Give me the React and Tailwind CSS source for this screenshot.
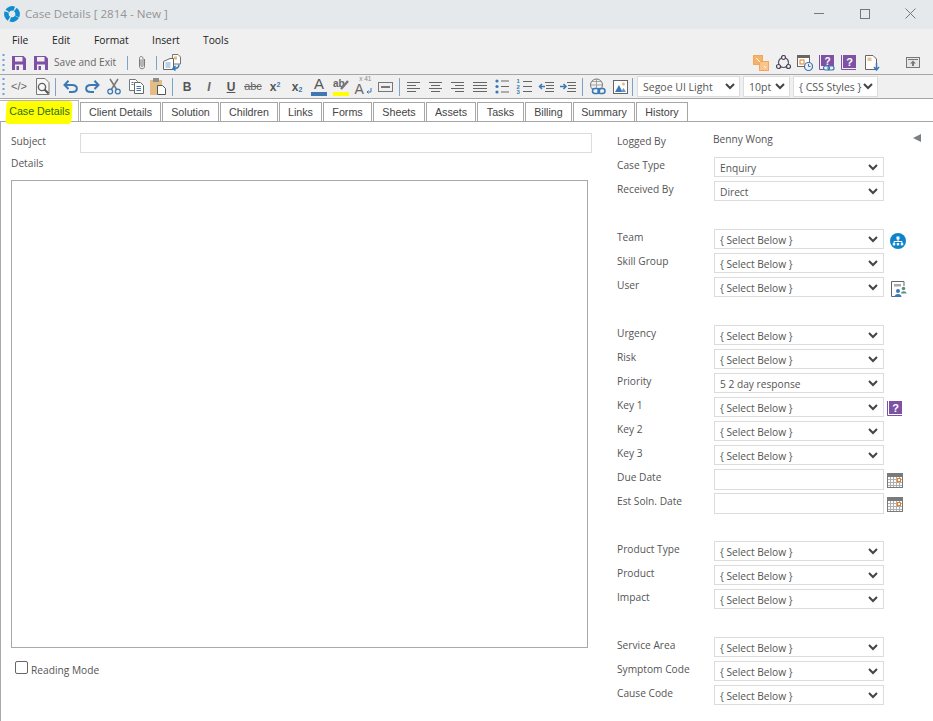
import React from "react";

const FONT = "font-['Open_Sans','Noto_Sans',sans-serif]";
const BLUE = "#3b78b5";
const PURPLE = "#7d51a3";

const Svg = ({ w = 16, h = 16, children, className = "" }) => (
  <svg width={w} height={h} viewBox={`0 0 ${w} ${h}`} fill="none" className={`block shrink-0 ${className}`}>
    {children}
  </svg>
);

const Grip = () => (
  <Svg w={3} h={18} className="ml-[2px]">
    {[1, 6, 11, 16].map((y) => (
      <rect key={y} x="0.5" y={y - 1} width="2" height="2" fill="#6f9fd3" />
    ))}
  </Svg>
);
const Sep = ({ className = "" }) => <div className={`h-[18px] w-px shrink-0 bg-[#7fa3c8] ${className}`} />;
const Slot = ({ children }) => <div className="flex h-[22px] w-[22px] shrink-0 items-center justify-center">{children}</div>;

const Save = () => (
  <Svg w={14} h={14}>
    <path d="M0 0H11.5L14 2.5V14H0Z" fill={PURPLE} />
    <rect x="3" y="1" width="7.5" height="4.5" fill="#f0f0f0" />
    <rect x="3" y="8.5" width="8" height="5.5" fill="#f0f0f0" />
    <rect x="4.5" y="10" width="2.5" height="4" fill={PURPLE} />
  </Svg>
);
const Clip = () => (
  <Svg w={10} h={16}>
    <path d="M7.5 4V11.5C7.5 14.5 2.5 14.5 2.5 11.5V3.5C2.5 .8 6 .8 6 3.5V10.5C6 11.8 4 11.8 4 10.5V4.5" stroke="#7a7a7a" strokeWidth="1" />
  </Svg>
);
const Merge = () => (
  <Svg w={18} h={17}>
    <path d="M9.5 .5H15L17.5 3V10H9.5Z" fill="#fff" stroke="#777" />
    <rect x="11" y="2.5" width="3" height="3" fill="#e9b77c" />
    <path d="M.5 7.5L7 4.5H10.5V15.5H.5Z" fill="#fff" stroke="#666" />
    <rect x="2.5" y="8" width="5" height="6" fill="#b9d0e6" />
    <path d="M16 10.5C16 14.5 13 14.5 10 14.5M12.5 12L10 14.5L12.5 16.5" stroke="#2f7cc0" strokeWidth="1.5" />
  </Svg>
);
const Preview = () => (
  <Svg w={15} h={17}>
    <path d="M10 .5H1.5V16.5H14V4.5Z" stroke="#777" fill="#f8f8f8" />
    <circle cx="7" cy="9" r="3.6" stroke="#5f5f5f" strokeWidth="1.4" />
    <path d="M9.5 11.5L13.5 15.5" stroke="#555" strokeWidth="2" />
  </Svg>
);
const Undo = ({ flip }) => (
  <Svg w={15} h={13} className={flip ? "-scale-x-100" : ""}>
    <path d="M2 5H9C15.5 5 15.5 12 9 12H6" stroke={BLUE} strokeWidth="2" />
    <path d="M5.5 .8L1.5 5L5.5 9" stroke={BLUE} strokeWidth="2" />
  </Svg>
);
const Cut = () => (
  <Svg w={14} h={17}>
    <path d="M3 1L10 12M11 1L4 12" stroke="#777" strokeWidth="1.5" />
    <circle cx="3.2" cy="13.5" r="2.4" stroke={BLUE} strokeWidth="1.3" />
    <circle cx="10.8" cy="13.5" r="2.4" stroke={BLUE} strokeWidth="1.3" />
  </Svg>
);
const Copy = () => (
  <Svg w={15} h={15}>
    <path d="M.5 .5H6.5L8.5 2.5V11.5H.5Z" fill="#fff" stroke="#777" />
    <path d="M5.5 3.5H11.5L14.5 6.5V14.5H5.5Z" fill="#fff" stroke="#666" />
    <path d="M7.5 7.5H12M7.5 9.5H12M7.5 11.5H12M2.5 3.5H4.5M2.5 5.5H4.5" stroke={BLUE} />
  </Svg>
);
const Paste = () => (
  <Svg w={16} h={17}>
    <rect x="0" y="2" width="12" height="15" fill="#e3bd85" />
    <rect x="3" y="0" width="6" height="4" fill="#8d8d8d" />
    <path d="M7.5 7.5H12.5L15.5 10.5V16.5H7.5Z" fill="#fff" stroke="#555" />
  </Svg>
);
const Lines = ({ kind }) => {
  const rows = {
    l: [[0, 13], [0, 9], [0, 13], [0, 9]],
    c: [[0, 13], [2, 11], [0, 13], [2, 11]],
    r: [[0, 13], [4, 13], [0, 13], [4, 13]],
    j: [[0, 14], [0, 14], [0, 14], [0, 14]],
  }[kind];
  return (
    <Svg w={14} h={11}>
      {rows.map(([a, b], i) => (
        <path key={i} d={`M${a} ${1.5 + i * 3}H${b}`} stroke="#666" />
      ))}
    </Svg>
  );
};
const Bullets = () => (
  <Svg w={14} h={15}>
    {[2, 7.5, 13].map((y) => (
      <g key={y}>
        <circle cx="2" cy={y} r="1.6" fill={BLUE} />
        <path d={`M6 ${y}H14`} stroke="#666" />
      </g>
    ))}
  </Svg>
);
const Numbers = () => (
  <div className="h-[16px] w-[15px] shrink-0">
    {[0, 1, 2].map((i) => (
      <div key={i} className="flex h-[5.4px] items-center gap-[2px]">
        <span className="w-[4px] font-['Liberation_Sans'] text-[6px] font-bold leading-none text-[#3b78b5]">{i + 1}</span>
        <div className="h-px w-[9px] bg-[#666]" />
      </div>
    ))}
  </div>
);
const Indent = ({ out }) => (
  <Svg w={16} h={11}>
    <path d="M7 1.5H16M8 4.5H16M8 7.5H16M7 10.5H16" stroke="#666" />
    {out ? (
      <path d="M7 5.5H1.5M4 3L1.5 5.5L4 8" stroke={BLUE} strokeWidth="1.5" />
    ) : (
      <path d="M0 5.5H6M3.5 3L6 5.5L3.5 8" stroke={BLUE} strokeWidth="1.5" />
    )}
  </Svg>
);
const LinkIcon = () => (
  <Svg w={17} h={17}>
    <circle cx="7.5" cy="7" r="6" stroke="#777" />
    <path d="M1.5 7H13.5M7.5 1V13M3 3.5H12M3 10.5H12" stroke="#888" strokeWidth=".7" />
    <rect x="3.5" y="10.5" width="7" height="5" rx="2.5" fill="#f0f0f0" stroke={BLUE} strokeWidth="1.5" />
    <rect x="9" y="10.5" width="7" height="5" rx="2.5" fill="none" stroke={BLUE} strokeWidth="1.5" />
  </Svg>
);
const ImageIcon = () => (
  <Svg w={15} h={14}>
    <rect x=".5" y=".5" width="14" height="13" fill="#fff" stroke="#666" />
    <circle cx="10.5" cy="4" r="1.5" fill="#e9b77c" />
    <path d="M2 12L6 5L9.5 12Z" fill={BLUE} />
    <path d="M8 12L10.5 8L13 12Z" fill="#5f9ad0" />
  </Svg>
);
const Chevron = () => (
  <Svg w={10} h={7}>
    <path d="M1 1L5 5L9 1" stroke="#444" strokeWidth="2" />
  </Svg>
);

const ToolSelect = ({ label, w }) => (
  <div className={`mr-[3px] flex h-[21px] shrink-0 items-center justify-between border border-[#dcdcdc] bg-white pl-[5px] pr-[4px] text-[10.5px] text-[#555] ${w}`}>
    <span className="relative top-px whitespace-nowrap">{label}</span>
    <Chevron />
  </div>
);

const Select = ({ value }) => (
  <div className="flex h-5 w-[170px] shrink-0 items-center justify-between border border-[#dcdcdc] bg-white pl-[5px] pr-[5px]">
    <span className="relative top-[2px] whitespace-nowrap text-[10.2px] text-[#555]">{value}</span>
    <Chevron />
  </div>
);
const Input = () => <div className="h-[21px] w-[170px] shrink-0 border border-[#dcdcdc] bg-white" />;

const Calendar = () => (
  <Svg w={16} h={15} className="ml-[3px]">
    <rect width="16" height="15" fill="#7a7a7a" />
    <rect x="1" y="4" width="14" height="10" fill="#fafafa" />
    <path d="M3.5 4V14M6.5 4V14M9.5 4V14M12.5 4V14M1 6.5H15M1 9.5H15M1 12.5H15" stroke="#b0b0b0" />
    <rect x="10.5" y="5.5" width="3" height="3" fill="#fff" stroke="#e67e22" />
  </Svg>
);
const Book = () => (
  <Svg w={15} h={15}>
    <path d="M.5 0V14.5H15" stroke={PURPLE} />
    <rect x="2" y="0" width="13" height="13" fill={PURPLE} />
    <text x="8.5" y="11" textAnchor="middle" fontSize="11" fontWeight="700" fontFamily="Liberation Sans" fill="#fff">?</text>
  </Svg>
);
const BookLink = () => (
  <Svg w={16} h={16}>
    <path d="M.5 0V14.5H6" stroke={PURPLE} />
    <rect x="2" y="0" width="13" height="11" fill={PURPLE} />
    <text x="8.5" y="9.5" textAnchor="middle" fontSize="10" fontWeight="700" fontFamily="Liberation Sans" fill="#fff">?</text>
    <rect x="4.5" y="11" width="6" height="4" rx="2" fill="#f0f0f0" stroke={BLUE} strokeWidth="1.2" />
    <rect x="9" y="11" width="6" height="4" rx="2" stroke={BLUE} strokeWidth="1.2" />
  </Svg>
);
const OrgCircle = () => (
  <Svg w={16} h={16} className="ml-[6px] mt-[4px]">
    <circle cx="8" cy="8" r="8" fill="#0b84cc" />
    <rect x="6.5" y="3.5" width="3" height="3" fill="#fff" />
    <path d="M8 6V8.5M4 10V8.5H12V10" stroke="#fff" />
    <rect x="2.8" y="10" width="2.4" height="2.4" fill="#fff" />
    <rect x="6.8" y="10" width="2.4" height="2.4" fill="#fff" />
    <rect x="10.8" y="10" width="2.4" height="2.4" fill="#fff" />
  </Svg>
);
const UserDoc = () => (
  <Svg w={16} h={16} className="ml-[7px] mt-[4px]">
    <path d="M13 5V.5H.5V15.5H4" stroke="#666" />
    <rect x="3" y="3" width="7" height="2.5" fill="#aaa" />
    <circle cx="7" cy="10" r="2" fill={BLUE} />
    <path d="M3.5 16C3.5 12 10.5 12 10.5 16Z" fill={BLUE} />
    <circle cx="12.5" cy="7.5" r="1.8" fill="#5d9080" />
    <path d="M10 12.5C10 9.5 15.5 9.5 15.5 12.5Z" fill="#5d9080" />
  </Svg>
);

const Row = ({ label, children, after }) => (
  <div className="flex h-6 items-start">
    <div className="w-[97px] shrink-0 whitespace-nowrap text-[10.2px] leading-4 text-[#555]">{label}</div>
    {children}
    {after}
  </div>
);
const SB = "{ Select Below }";
const Gap = () => <div className="h-6" />;

const tabs = [
  ["Client Details", "w-[81px]"],
  ["Solution", "w-[57px]"],
  ["Children", "w-[58px]"],
  ["Links", "w-[43px]"],
  ["Forms", "w-[49px]"],
  ["Sheets", "w-[52px]"],
  ["Assets", "w-[50px]"],
  ["Tasks", "w-[47px]"],
  ["Billing", "w-[47px]"],
  ["Summary", "w-[62px]"],
  ["History", "w-[52px]"],
];

export default function App() {
  return (
    <div className={`relative h-[721px] w-[933px] overflow-hidden bg-white ${FONT}`}>
      {/* Title bar */}
      <div className="flex h-[29px] items-center bg-[#e6e9ec] pb-[2px]">
        <Svg w={16} h={16} className="ml-[4px]">
          <circle cx="8" cy="8" r="5.6" stroke="#128cd0" strokeWidth="4.6" strokeDasharray="7.4 1.4" transform="rotate(30 8 8)" />
        </Svg>
        <span className="ml-[5px] whitespace-nowrap text-[11.6px] text-[#949494]">Case Details [ 2814 - New ]</span>
        <div className="ml-auto flex items-center pr-[17px]">
          <div className="h-px w-[10px] bg-[#777]" />
          <div className="ml-[36px] h-[10px] w-[10px] border border-[#777]" />
          <Svg w={11} h={11} className="ml-[35px]">
            <path d="M.5 .5L10.5 10.5M10.5 .5L.5 10.5" stroke="#777" />
          </Svg>
        </div>
      </div>

      {/* Menu */}
      <div className="flex h-[22px] items-center bg-[#f0f0f0] pl-[12px] pt-[2px] text-[10.3px] text-[#222]">
        <span className="w-[40px]">File</span>
        <span className="w-[42px]">Edit</span>
        <span className="w-[58px]">Format</span>
        <span className="w-[51px]">Insert</span>
        <span>Tools</span>
      </div>

      {/* Toolbar 1 */}
      <div className="flex h-[24px] items-center border-b border-[#a6a6a6] bg-[#f0f0f0] text-[#666]">
        <Grip />
        <div className="ml-[7px]"><Save /></div>
        <div className="ml-[8px]"><Save /></div>
        <span className="ml-[6px] whitespace-nowrap text-[10.1px] text-[#666]">Save and Exit</span>
        <Sep className="ml-[11px] !h-[14px]" />
        <div className="ml-[9px]"><Clip /></div>
        <Sep className="ml-[9px] !h-[14px]" />
        <div className="ml-[6px]"><Merge /></div>
        <div className="ml-auto flex items-center">
          <Svg w={16} h={16}>
            <rect x=".5" y=".5" width="9" height="9" fill="#f6b26b" stroke="#f2a65a" />
            <rect x="6.5" y="6.5" width="9" height="9" fill="#f9c58d" stroke="#f2a65a" />
            <path d="M3 3L7 7M11 11L13 13" stroke="#fff" />
          </Svg>
          <Svg w={15} h={15} className="ml-[7px]">
            <circle cx="7.5" cy="7.5" r="5" stroke="#556" strokeWidth="1.2" />
            <circle cx="7.5" cy="2.5" r="2" fill="#f0f0f0" stroke="#445" strokeWidth="1.2" />
            <circle cx="2.5" cy="11.5" r="2" fill="#f0f0f0" stroke="#445" strokeWidth="1.2" />
            <circle cx="12.5" cy="11.5" r="2" fill="#f0f0f0" stroke="#445" strokeWidth="1.2" />
          </Svg>
          <Svg w={16} h={16} className="ml-[6px]">
            <rect x=".5" y=".5" width="12" height="11" fill="#fff" stroke="#666" />
            <rect x="1" y="1" width="11" height="2" fill="#666" />
            <rect x="3" y="5" width="4" height="4" stroke="#e67e22" />
            <circle cx="11.5" cy="11.5" r="4" fill="#f0f0f0" stroke={BLUE} strokeWidth="1.2" />
            <path d="M11.5 9V11.5H13.5" stroke={BLUE} />
          </Svg>
          <div className="ml-[6px]"><BookLink /></div>
          <div className="ml-[6px]"><Book /></div>
          <Svg w={15} h={16} className="ml-[9px]">
            <path d="M.5 .5H8L11.5 4V14.5H.5Z" fill="#fff" stroke="#666" />
            <rect x="2.5" y="2.5" width="4" height="3.5" fill="#e9c48f" />
            <path d="M11.5 8V14M9 12L11.5 15L14 12" stroke={BLUE} strokeWidth="1.5" />
          </Svg>
          <Svg w={14} h={11} className="ml-[26px] mr-[13px]">
            <rect x=".5" y=".5" width="13" height="10" stroke="#777" fill="#e6e6e6" />
            <path d="M2 2.5H12" stroke="#777" />
            <path d="M7 3.5L10 6.5H8V9H6V6.5H4Z" fill="#777" />
          </Svg>
        </div>
      </div>

      {/* Toolbar 2 */}
      <div className="flex h-[24px] items-center border-b border-[#a6a6a6] bg-[#f0f0f0]">
        <Grip />
        <div className="ml-[3px]" />
        <Slot><span className="font-['Liberation_Sans'] text-[11px] text-[#666]">&lt;/&gt;</span></Slot>
        <div className="ml-px" />
        <Slot><Preview /></Slot>
        <Sep className="ml-[2px] mr-[3px]" />
        <Slot><Undo /></Slot>
        <Slot><Undo flip /></Slot>
        <Slot><Cut /></Slot>
        <Slot><Copy /></Slot>
        <Slot><Paste /></Slot>
        <Sep className="mx-[3px]" />
        <Slot><span className="font-['Liberation_Sans'] text-[12px] font-bold text-[#555]">B</span></Slot>
        <Slot><span className="font-['Liberation_Sans'] text-[12px] font-bold italic text-[#666]">I</span></Slot>
        <Slot><span className="font-['Liberation_Sans'] text-[12px] font-bold text-[#555] underline">U</span></Slot>
        <Slot><span className="font-['Liberation_Sans'] text-[11px] text-[#666] line-through">abc</span></Slot>
        <Slot><span className="font-['Liberation_Sans'] text-[12px] font-bold text-[#555]">x<sup className="text-[7px] text-[#3b78b5]">2</sup></span></Slot>
        <Slot><span className="font-['Liberation_Sans'] text-[12px] font-bold text-[#555]">x<sub className="text-[7px] text-[#3b78b5]">2</sub></span></Slot>
        <Slot>
          <div className="flex flex-col items-center">
            <span className="font-['Liberation_Sans'] text-[15px] leading-[14px] text-[#555]">A</span>
            <div className="mt-px h-[4px] w-[16px] bg-[#3f77b0]" />
          </div>
        </Slot>
        <Slot>
          <div className="flex flex-col items-start">
            <div className="relative h-[13px] w-[16px]">
              <span className="absolute left-0 top-0 font-['Liberation_Sans'] text-[10px] font-bold leading-[12px] text-[#666]">ab</span>
              <Svg w={16} h={13} className="absolute left-0 top-0">
                <path d="M8 11L15 3" stroke="#777" strokeWidth="2.4" />
              </Svg>
            </div>
            <div className="mt-px h-[4px] w-[16px] bg-[#ffff00]" />
          </div>
        </Slot>
        <Slot>
          <div className="relative h-[17px] w-[17px]">
            <span className="absolute bottom-[-1px] left-0 font-['Liberation_Sans'] text-[14px] leading-[14px] text-[#666]">A</span>
            <span className="absolute right-0 top-[-3px] whitespace-nowrap font-['Liberation_Sans'] text-[6.5px] leading-[7px] text-[#888]">x 41</span>
            <Svg w={6} h={7} className="absolute bottom-0 right-0">
              <path d="M5 0V4H1M2.5 2.5L1 4L2.5 5.5" stroke={BLUE} />
            </Svg>
          </div>
        </Slot>
        <Slot>
          <Svg w={15} h={10}>
            <rect x=".5" y=".5" width="14" height="9" stroke="#777" />
            <path d="M3 5H12" stroke="#777" strokeWidth="2" />
          </Svg>
        </Slot>
        <Sep className="mx-[3px]" />
        <Slot><Lines kind="l" /></Slot>
        <Slot><Lines kind="c" /></Slot>
        <Slot><Lines kind="r" /></Slot>
        <Slot><Lines kind="j" /></Slot>
        <Slot><Bullets /></Slot>
        <Slot><Numbers /></Slot>
        <Slot><Indent out /></Slot>
        <Slot><Indent /></Slot>
        <Sep className="mx-[3px]" />
        <Slot><LinkIcon /></Slot>
        <div className="ml-px" />
        <Slot><ImageIcon /></Slot>
        <Sep className="ml-px mr-[4px]" />
        <ToolSelect label="Segoe UI Light" w="w-[103px]" />
        <ToolSelect label="10pt" w="w-[47px]" />
        <ToolSelect label="{ CSS Styles }" w="w-[85px]" />
      </div>

      {/* Tabs */}
      <div className="relative flex h-[23px] items-end gap-px border-b border-[#a6a6a6] font-['Liberation_Sans',sans-serif] text-[10.7px] text-[#444]">
        <div className="absolute left-[6px] top-[2px] h-[23px] w-[66px] -skew-x-3 rounded-sm bg-[#ffff00]" />
        <div className="relative flex h-[21px] w-[79px] items-center justify-center border-r border-t border-[#b5b5b5] pl-[1px] text-[#2b6d1e]">Case Details</div>
        {tabs.map(([t, w]) => (
          <div key={t} className={`flex h-[19px] shrink-0 items-center justify-center border border-b-0 border-[#a6a6a6] ${w}`}>{t}</div>
        ))}
      </div>

      {/* Body */}
      <div className="relative flex h-[599px] border-l border-[#a9a9a9] text-[10.2px] text-[#555]">
        <Svg w={8} h={8} className="absolute left-[912px] top-[12px]">
          <path d="M8 0V8L0 4Z" fill="#7b7f86" />
        </Svg>

        <div className="w-[616px] shrink-0 pl-[10px] pt-[11px]">
          <div className="flex items-start">
            <div className="w-[69px] leading-4">Subject</div>
            <div className="h-[20px] w-[512px] border border-[#dcdcdc]" />
          </div>
          <div className="mt-[2px] h-4 leading-4">Details</div>
          <div className="mt-[9px] h-[468px] w-[577px] border border-[#a9a9a9]" />
          <div className="mt-[13px] flex items-start pl-[4px]">
            <div className="h-[13px] w-[13px] rounded-[2px] border border-[#666]" />
            <span className="ml-[3px] mt-px leading-4">Reading Mode</span>
          </div>
        </div>

        <div className="flex-1 pt-[11px]">
          <div className="flex h-6 items-start">
            <div className="w-[96px] leading-4">Logged By</div>
            <div className="leading-3">Benny Wong</div>
          </div>
          <Row label="Case Type"><Select value="Enquiry" /></Row>
          <Row label="Received By"><Select value="Direct" /></Row>
          <Gap />
          <Row label="Team" after={<OrgCircle />}><Select value={SB} /></Row>
          <Row label="Skill Group"><Select value={SB} /></Row>
          <Row label="User" after={<UserDoc />}><Select value={SB} /></Row>
          <Gap />
          <Row label="Urgency"><Select value={SB} /></Row>
          <Row label="Risk"><Select value={SB} /></Row>
          <Row label="Priority"><Select value="5 2 day response" /></Row>
          <Row label="Key 1" after={<div className="ml-[3px] mt-[4px]"><Book /></div>}><Select value={SB} /></Row>
          <Row label="Key 2"><Select value={SB} /></Row>
          <Row label="Key 3"><Select value={SB} /></Row>
          <Row label="Due Date" after={<div className="mt-[4px]"><Calendar /></div>}><Input /></Row>
          <Row label="Est Soln. Date" after={<div className="mt-[4px]"><Calendar /></div>}><Input /></Row>
          <Gap />
          <Row label="Product Type"><Select value={SB} /></Row>
          <Row label="Product"><Select value={SB} /></Row>
          <Row label="Impact"><Select value={SB} /></Row>
          <Gap />
          <Row label="Service Area"><Select value={SB} /></Row>
          <Row label="Symptom Code"><Select value={SB} /></Row>
          <Row label="Cause Code"><Select value={SB} /></Row>
        </div>
      </div>
    </div>
  );
}
